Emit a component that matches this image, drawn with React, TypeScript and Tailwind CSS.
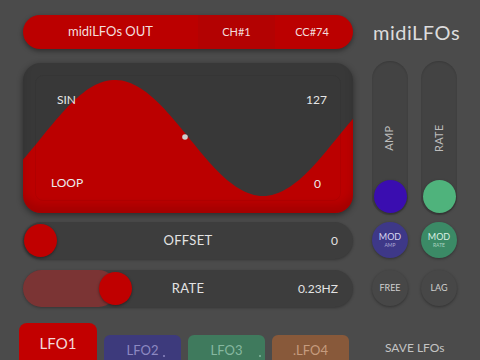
import React from 'react';

const font = { fontFamily: 'Lato, "Open Sans", sans-serif' };

function wavePath() {
  const pts: string[] = [];
  for (let x = 0; x <= 330; x += 3) {
    const y = 75 - 58 * Math.sin((2 * Math.PI * (x - 18)) / 296);
    pts.push(`L${x},${y.toFixed(1)}`);
  }
  return `M0,150 ${pts.join(' ')} L330,150 Z`;
}

function Display() {
  return (
    <div className="relative h-[150px] rounded-[18px] bg-[#383838] overflow-hidden shadow-[0_2px_6px_rgba(0,0,0,0.45)]">
      <svg className="absolute inset-0" width="330" height="150" viewBox="0 0 330 150">
        <path d={wavePath()} fill="#bb0000" />
        <circle cx="162" cy="74" r="2.8" fill="#cfcfcf" />
      </svg>
      <div className="absolute inset-[12px] rounded-[8px] border border-black/5" />
      <div className="absolute inset-0 rounded-[18px] shadow-[inset_0_-8px_8px_rgba(0,0,0,0.12)]" />
      <span className="absolute left-[34px] top-[28px] text-[12px] text-[#e6e6e6]">SIN</span>
      <span className="absolute right-[26px] top-[28px] text-[12px] text-[#e6e6e6]">127</span>
      <span className="absolute left-[28px] top-[111px] text-[12px] text-[#ececec]">LOOP</span>
      <span className="absolute right-[32px] top-[112px] text-[12px] text-[#ececec]">0</span>
    </div>
  );
}

function HSlider({ label, value, knob, fill }: { label: string; value: string; knob: number; fill?: boolean }) {
  return (
    <div className="relative h-[37px] rounded-full bg-[#3d3d3d] flex items-center shadow-[0_1px_3px_rgba(0,0,0,0.3)]">
      {fill && (
        <div className="absolute left-0 top-0 bottom-0 rounded-full bg-[#7b3434]" style={{ width: knob + 18 }} />
      )}
      <div
        className="absolute top-[2px] w-[33px] h-[33px] rounded-full bg-[#c00000] shadow-[0_1px_3px_rgba(0,0,0,0.4)]"
        style={{ left: knob }}
      />
      <span className="flex-1 text-center text-[13px] text-[#e3e3e3] tracking-wide">{label}</span>
      <span className="absolute right-[15px] text-[12px] text-[#e3e3e3]">{value}</span>
    </div>
  );
}

function VSlider({ label, color }: { label: string; color: string }) {
  return (
    <div className="w-[36px] h-[154px] rounded-full bg-[#434343] flex flex-col items-center shadow-[inset_0_1px_2px_rgba(0,0,0,0.15)]">
      <div className="h-[90px] flex items-center justify-center">
        <span className="-rotate-90 text-[11px] text-[#bdbdbd] tracking-wide mt-[64px]">{label}</span>
      </div>
      <div className={`mt-[29px] w-[33px] h-[33px] rounded-full ${color} shadow-[0_1px_3px_rgba(0,0,0,0.35)]`} />
    </div>
  );
}

function Round({ bg, top, sub, text }: { bg: string; top: string; sub?: string; text: string }) {
  return (
    <div className={`w-[36px] h-[36px] rounded-full ${bg} flex flex-col items-center justify-center shadow-[0_1px_3px_rgba(0,0,0,0.35)]`}>
      <span className={`text-[9px] leading-[10px] ${text}`}>{top}</span>
      {sub && <span className={`text-[5px] leading-[6px] ${text} opacity-70`}>{sub}</span>}
    </div>
  );
}

export default function App() {
  return (
    <div className="w-[480px] h-[360px] bg-[#4b4b4b] overflow-hidden flex flex-col" style={font}>
      <div className="flex pt-[15px] pl-[23px] gap-[19px]">
        <div className="w-[330px] flex flex-col">
          <div className="h-[34px] rounded-full bg-[#bb0000] flex overflow-hidden text-[#f3dede] shadow-[0_2px_5px_rgba(0,0,0,0.4)]">
            <div className="w-[175px] flex items-center justify-center text-[13px]">midiLFOs OUT</div>
            <div className="w-[77px] bg-[#b30202] flex items-center justify-center text-[11px]">CH#1</div>
            <div className="flex-1 flex items-center justify-center text-[11px] pr-[4px]">CC#74</div>
          </div>
          <div className="mt-[14px]">
            <Display />
          </div>
          <div className="mt-[9px]">
            <HSlider label="OFFSET" value="0" knob={1} />
          </div>
          <div className="mt-[11px]">
            <HSlider label="RATE" value="0.23HZ" knob={76} fill />
          </div>
        </div>
        <div className="w-[85px] flex flex-col">
          <div className="h-[34px] flex items-center text-[20px] text-[#dcdcdc] pl-[1px] tracking-wide">midiLFOs</div>
          <div className="mt-[12px] flex gap-[13px]">
            <VSlider label="AMP" color="bg-[#3a0db0]" />
            <VSlider label="RATE" color="bg-[#4fb37c]" />
          </div>
          <div className="mt-[7px] flex gap-[13px]">
            <Round bg="bg-[#3e3888]" top="MOD" sub="AMP" text="text-[#d8d6f0]" />
            <Round bg="bg-[#3b8a66]" top="MOD" sub="RATE" text="text-[#d8efe2]" />
          </div>
          <div className="mt-[12px] flex gap-[13px]">
            <Round bg="bg-[#474747]" top="FREE" text="text-[#cfcfcf]" />
            <Round bg="bg-[#474747]" top="LAG" text="text-[#cfcfcf]" />
          </div>
        </div>
      </div>
      <div className="mt-[16px] flex items-start pl-[19px] gap-[7px]">
        <div className="w-[78px] h-[40px] rounded-t-[8px] bg-[#c20000] flex justify-center pt-[9px] text-[15px] text-[#f2d8d8]">LFO1</div>
        <div className="relative mt-[12px] w-[77px] h-[30px] rounded-t-[6px] bg-[#3d3a7c] flex justify-center pt-[6px] text-[13px] text-[#8d89c2]">
          LFO2<span className="absolute left-[59px] top-[20px] w-[2px] h-[2px] rounded-full bg-[#8d89c2]" />
        </div>
        <div className="relative mt-[12px] w-[77px] h-[30px] rounded-t-[6px] bg-[#3f7a5d] flex justify-center pt-[6px] text-[13px] text-[#86b8a0]">
          LFO3<span className="absolute left-[71px] top-[20px] w-[2px] h-[2px] rounded-full bg-[#86b8a0]" />
        </div>
        <div className="mt-[12px] w-[77px] h-[30px] rounded-t-[6px] bg-[#88593a] flex justify-center pt-[6px] text-[13px] text-[#c69c7e]">.LFO4</div>
        <div className="mt-[16px] ml-[29px] text-[12px] text-[#c4c4c4]">SAVE LFOs</div>
      </div>
    </div>
  );
}
